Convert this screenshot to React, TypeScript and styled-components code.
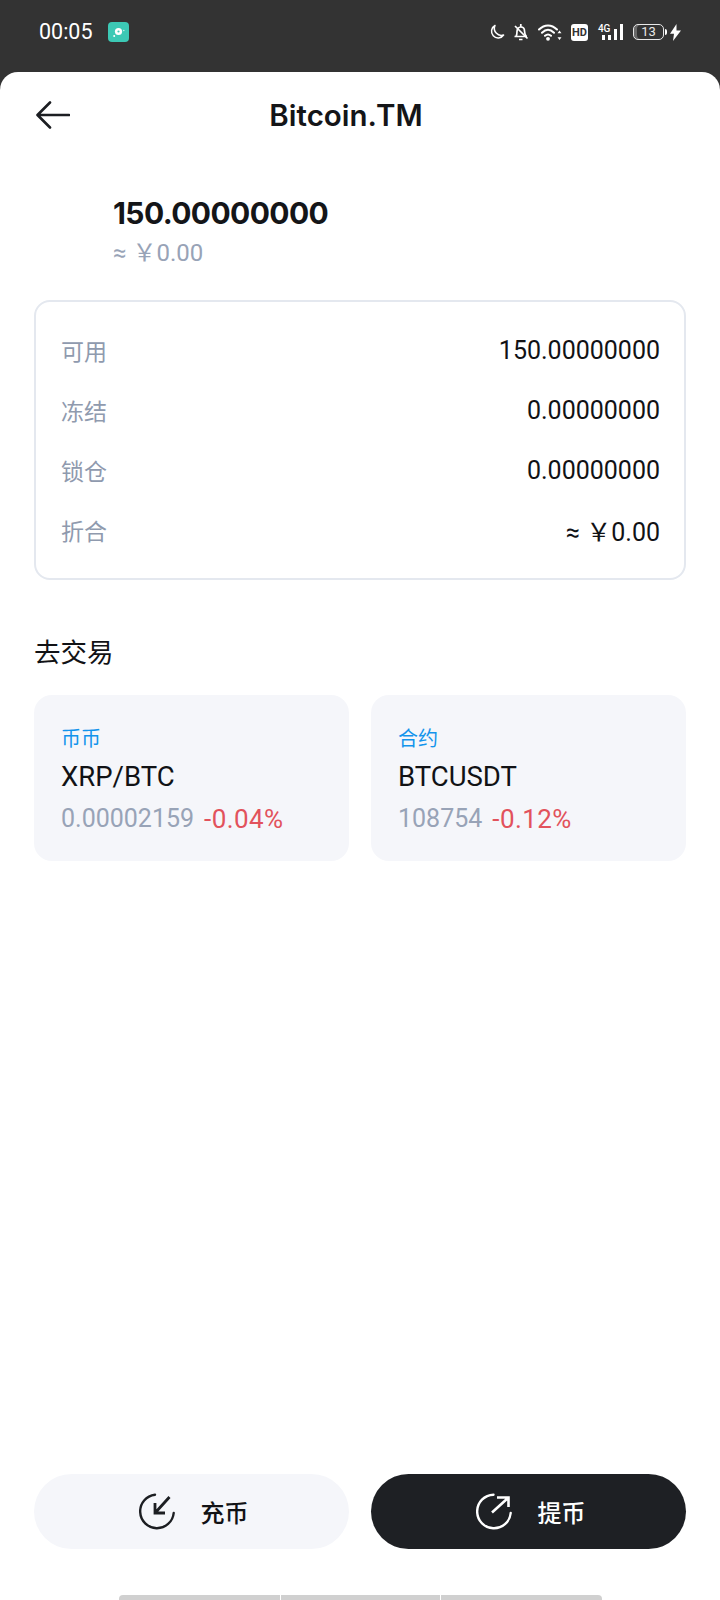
import styled, { createGlobalStyle } from "styled-components";

const GlobalStyle = createGlobalStyle`
  html, body {
    margin: 0;
    padding: 0;
    background: #ffffff;
  }
  * {
    box-sizing: border-box;
  }
`;

const balanceRows = [
  { label: "可用", value: "150.00000000" },
  { label: "冻结", value: "0.00000000" },
  { label: "锁仓", value: "0.00000000" },
  { label: "折合", value: "≈ ￥0.00" },
];

const markets = [
  { type: "币币", pair: "XRP/BTC", price: "0.00002159", change: "-0.04%" },
  { type: "合约", pair: "BTCUSDT", price: "108754", change: "-0.12%" },
];

const App = () => {
  return (
    <Page>
      <GlobalStyle />
      <StatusBar>
        <StatusLeft>
          <Time>00:05</Time>
          <AppBadge viewBox="0 0 21 20">
            <rect width="21" height="20" rx="4" fill="#3cc9b5" />
            <circle cx="10.5" cy="9.5" r="3.6" fill="#fff" />
            <circle cx="10.5" cy="9.5" r="1.1" fill="#3cc9b5" />
            <circle cx="6.2" cy="14" r="1" fill="#fff" />
            <circle cx="15.8" cy="8.5" r="0.7" fill="#d6f5f0" />
          </AppBadge>
        </StatusLeft>
        <StatusIcons>
          <svg width="16" height="16" viewBox="0 0 16 16" fill="none">
            <path d="M6 1.5A6.6 6.6 0 1 0 14.6 11 7 7 0 0 1 6 1.5Z" stroke="#fff" strokeWidth="1.5" strokeLinejoin="round" />
          </svg>
          <svg width="16" height="18" viewBox="0 0 16 18" fill="none" style={{ marginLeft: 8 }}>
            <path d="M1.500 13.500h12.500M3 13.500c1-1.500 1-3 1-5 0-2.600 1.600-4.500 3.800-4.500S11.500 5.500 11.500 8c0 2 .5 4 2 5.500" stroke="#fff" strokeWidth="1.700" />
            <path d="M7.800 1v3M6 16.500h3.500M2 3l12.500 12.500" stroke="#fff" strokeWidth="1.700" />
          </svg>
          <svg width="24" height="18" viewBox="0 0 24 18" fill="none" style={{ marginLeft: 9 }}>
            <path d="M1 6.500C6.500 1 13.500 1 19 6.500M4 9.700c3.800-3.700 8.200-3.700 12 0M7 12.800c2-1.800 4-1.800 6 0" stroke="#fff" strokeWidth="2" strokeLinecap="round" />
            <circle cx="10" cy="15.800" r="1.900" fill="#fff" />
            <path d="M21.500 7.500l-2 2.800h4zM21.500 17l-2-2.800h4z" fill="#fff" />
          </svg>
          <HdBadge>HD</HdBadge>
          <SignalBlock>
            <SignalLabel>4G</SignalLabel>
            <SignalBars>
              <SignalBar $height={5} />
              <SignalBar $height={5} />
              <SignalBar $height={11} />
              <SignalBar $height={16} />
            </SignalBars>
          </SignalBlock>
          <Battery>
            <BatteryBody>13</BatteryBody>
            <BatteryTip />
          </Battery>
          <svg width="11" height="17" viewBox="0 0 11 17" style={{ marginLeft: 3 }}>
            <path d="M6.500 0 0 9.800h4L3 17l8-10.500H6.500z" fill="#fff" />
          </svg>
        </StatusIcons>
      </StatusBar>

      <Sheet>
        <Header>
          <BackButton>
            <svg width="35" height="30" viewBox="0 0 35 30" fill="none">
              <path d="M34 15H3M15 2.500 2.500 15 15 27.500" stroke="#1c1e22" strokeWidth="2.600" strokeLinecap="round" strokeLinejoin="round" />
            </svg>
          </BackButton>
          <Title>Bitcoin.TM</Title>
        </Header>

        <Summary>
          <Amount>150.00000000</Amount>
          <Approx>≈ ￥0.00</Approx>
        </Summary>

        <BalanceCard>
          {balanceRows.map((row) => (
            <BalanceRow key={row.label}>
              <BalanceLabel>{row.label}</BalanceLabel>
              <BalanceValue>{row.value}</BalanceValue>
            </BalanceRow>
          ))}
        </BalanceCard>

        <SectionTitle>去交易</SectionTitle>
        <MarketGrid>
          {markets.map((m) => (
            <MarketCard key={m.pair}>
              <MarketType>{m.type}</MarketType>
              <MarketPair>{m.pair}</MarketPair>
              <MarketStats>
                <Price>{m.price}</Price>
                <Change>{m.change}</Change>
              </MarketStats>
            </MarketCard>
          ))}
        </MarketGrid>

        <Footer>
          <ActionButton>
            <svg width="36" height="37" viewBox="0 0 36 37" fill="none">
              <path d="M16 1.700A16.800 16.800 0 1 0 34.700 20" stroke="#1c1e22" strokeWidth="2.400" strokeLinecap="round" />
              <path d="M30.500 4 16 20M16 10V20H26" stroke="#1c1e22" strokeWidth="2.800" />
            </svg>
            <span>充币</span>
          </ActionButton>
          <ActionButton $dark>
            <svg width="36" height="37" viewBox="0 0 36 37" fill="none">
              <path d="M17.500 1.700A16.800 16.800 0 1 0 34.700 20" stroke="#fff" strokeWidth="2.400" strokeLinecap="round" />
              <path d="M16 19.500 32 5M21 4.500H32.500V14" stroke="#fff" strokeWidth="2.600" />
            </svg>
            <span>提币</span>
          </ActionButton>
        </Footer>

        <HomeBar>
          <HomeSegment $width={161} />
          <HomeSegment $width={159} />
          <HomeSegment $width={161} />
        </HomeBar>
      </Sheet>
    </Page>
  );
};

export default App;

const Page = styled.div`
  width: 720px;
  height: 1600px;
  overflow: hidden;
  display: flex;
  flex-direction: column;
  background: #333333;
  font-family: Roboto, "Noto Sans CJK SC", sans-serif;
  color: #111215;
`;

const StatusBar = styled.div`
  height: 72px;
  flex-shrink: 0;
  padding: 0 39px 8px;
  display: flex;
  align-items: center;
  justify-content: space-between;
  color: #ffffff;
`;

const StatusLeft = styled.div`
  display: flex;
  align-items: center;
  gap: 15px;
`;

const Time = styled.span`
  font-size: 21.5px;
  line-height: 24px;
`;

const AppBadge = styled.svg`
  width: 21px;
  height: 20px;
`;

const StatusIcons = styled.div`
  display: flex;
  align-items: center;
`;

const HdBadge = styled.span`
  width: 17px;
  height: 17px;
  margin-left: 9px;
  border-radius: 3px;
  background: #ffffff;
  color: #333333;
  font-size: 11px;
  font-weight: 700;
  line-height: 17px;
  text-align: center;
`;

const SignalBlock = styled.div`
  position: relative;
  width: 25px;
  height: 16px;
  margin-left: 10px;
`;

const SignalLabel = styled.span`
  position: absolute;
  left: 0;
  top: 0;
  font-size: 10px;
  font-weight: 500;
  line-height: 10px;
  letter-spacing: -0.3px;
`;

const SignalBars = styled.div`
  height: 100%;
  display: flex;
  align-items: flex-end;
  justify-content: flex-end;
  gap: 3px;
`;

const SignalBar = styled.i<{ $height: number }>`
  width: 3px;
  height: ${(p) => p.$height}px;
  background: #ffffff;
`;

const Battery = styled.div`
  display: flex;
  align-items: center;
  margin-left: 10px;
`;

const BatteryBody = styled.span`
  width: 31px;
  height: 16px;
  border: 1.5px solid #e8e8e8;
  border-radius: 5px;
  font-size: 13px;
  line-height: 13px;
  text-align: center;
  color: #e8e8e8;
  box-shadow: inset 3px 0 0 #6a6a6a;
`;

const BatteryTip = styled.i`
  width: 2px;
  height: 6px;
  margin-left: 1px;
  border-radius: 0 2px 2px 0;
  background: #ffffff;
`;

const Sheet = styled.div`
  flex: 1;
  display: flex;
  flex-direction: column;
  padding: 0 34px;
  background: #ffffff;
  border-radius: 18px 18px 0 0;
`;

const Header = styled.div`
  position: relative;
  height: 86px;
  padding-right: 28px;
  display: flex;
  align-items: center;
  justify-content: center;
`;

const BackButton = styled.div`
  position: absolute;
  left: 1px;
  top: 28px;
  height: 30px;
`;

const Title = styled.h1`
  margin: 0;
  font-family: Inter, "Noto Sans CJK SC", sans-serif;
  font-size: 29.5px;
  font-weight: 600;
  line-height: 86px;
  color: #141518;
`;

const Summary = styled.div`
  margin-top: 35px;
  padding-left: 79px;
`;

const Amount = styled.div`
  font-family: Inter, "Noto Sans CJK SC", sans-serif;
  font-size: 30px;
  font-weight: 700;
  line-height: 40px;
  letter-spacing: -0.6px;
  color: #141518;
`;

const Approx = styled.div`
  font-size: 24px;
  line-height: 40px;
  color: #98a3b7;
`;

const BalanceCard = styled.div`
  margin-top: 27px;
  height: 280px;
  padding: 18px 24px 0 25px;
  border: 2px solid #e4e8ef;
  border-radius: 16px;
`;

const BalanceRow = styled.div`
  height: 60px;
  display: flex;
  align-items: center;
  justify-content: space-between;
`;

const BalanceLabel = styled.span`
  font-size: 23px;
  color: #8f9aae;
`;

const BalanceValue = styled.span`
  font-size: 25px;
  color: #111215;
`;

const SectionTitle = styled.h2`
  margin: 55px 0 0;
  font-size: 26.5px;
  font-weight: 400;
  line-height: 36px;
  color: #111215;
`;

const MarketGrid = styled.div`
  margin-top: 24px;
  display: grid;
  grid-template-columns: 1fr 1fr;
  gap: 22px;
`;

const MarketCard = styled.div`
  height: 166px;
  padding: 29px 27px 0;
  border-radius: 18px;
  background: #f5f6fa;
`;

const MarketType = styled.div`
  font-size: 20px;
  line-height: 30px;
  color: #1394ec;
`;

const MarketPair = styled.div`
  margin-top: 5px;
  font-size: 27.5px;
  line-height: 36px;
  color: #111215;
`;

const MarketStats = styled.div`
  margin-top: 6px;
  display: flex;
  gap: 10px;
  font-size: 25px;
  line-height: 36px;
`;

const Price = styled.span`
  color: #98a3b7;
`;

const Change = styled.span`
  font-size: 26px;
  letter-spacing: 0.4px;
  color: #e2525c;
`;

const Footer = styled.div`
  margin-top: auto;
  display: grid;
  grid-template-columns: 1fr 1fr;
  gap: 22px;
`;

const ActionButton = styled.div<{ $dark?: boolean }>`
  height: 75px;
  padding-left: 4px;
  display: flex;
  align-items: center;
  justify-content: center;
  gap: 26px;
  border-radius: 38px;
  font-size: 24px;
  font-weight: 500;
  background: ${(p) => (p.$dark ? "#1e2024" : "#f5f6fa")};
  color: ${(p) => (p.$dark ? "#ffffff" : "#111215")};
`;

const HomeBar = styled.div`
  flex-shrink: 0;
  height: 5px;
  margin: 46px auto 0;
  display: flex;
  gap: 1px;
  overflow: hidden;
  border-radius: 4px 4px 0 0;
`;

const HomeSegment = styled.i<{ $width: number }>`
  width: ${(p) => p.$width}px;
  background: #d0d0d0;
`;
